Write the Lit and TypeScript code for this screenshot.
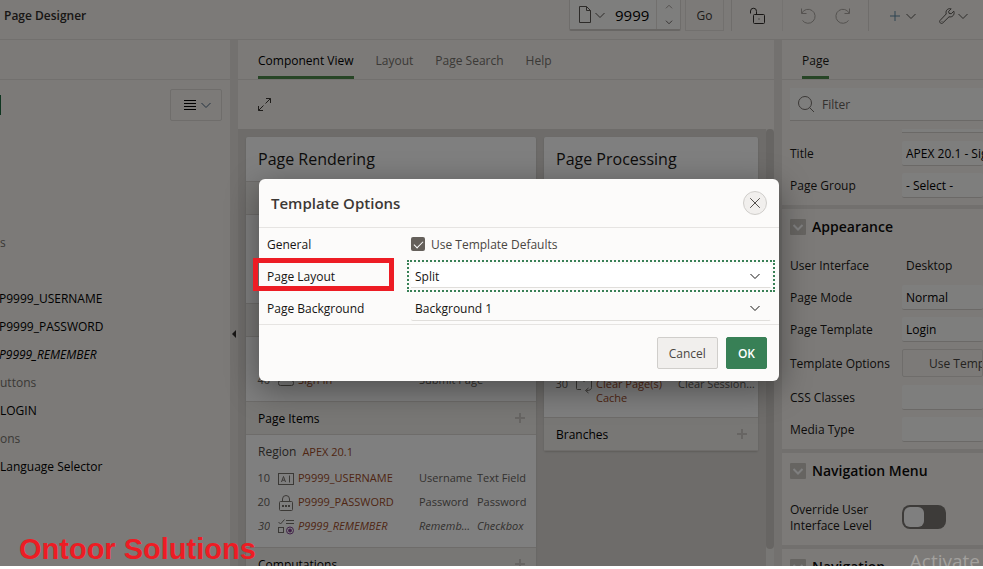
import { LitElement, html, css, svg, nothing } from "lit";
import { customElement, property } from "lit/decorators.js";

const shapes: Record<string, unknown> = {
  chevron: svg`<path d="M3.5 6l4.5 4.5L12.5 6"/>`,
  up: svg`<path d="M4.5 9.5L8 6l3.5 3.5"/>`,
  down: svg`<path d="M4.5 6.5L8 10l3.5-3.5"/>`,
  plus: svg`<path d="M8 3v10M3 8h10"/>`,
  page: svg`<path d="M3.500-.5h7l4 4v12h-11zM10.500-.5v4h4"/>`,
  lock: svg`<rect x="4.500" y="6.500" width="11" height="9" rx="1"/><path d="M7.500 6.500V3.500a3 3 0 0 0-6-.5V5.500"/><path d="M9.500 11h1"/>`,
  undo: svg`<path d="M1.500.5v5H6.500M1.800 5.200A7 7 0 1 1 2.500 12.500"/>`,
  redo: svg`<path d="M14.500.5v5H9.500M14.200 5.200A7 7 0 1 0 13.500 12.500"/>`,
  wrench: svg`<path d="M14.800 3.200l-2.600 2.600-2.200-.500-.400-2L12.200.8C10.300.2 7.300 1 7 4.200l.2 1.800L1 12.500c-1.200 1.700 1 3.800 2.700 2.500L10 8.800c3.300.8 6-2 4.800-5.600z"/><path d="M2.700 13.500h.6"/>`,
  menu: svg`<path d="M2 3.500h12M2 6.500h12M2 9.500h12M2 12.500h12"/>`,
  expand: svg`<path d="M7.500 6.500L12.500 1.500M8 1.500h4.500V6M5.500 8.500L.5 13.500M.5 9v4.500H5"/>`,
  search: svg`<circle cx="7" cy="7" r="6.500"/><path d="M11.500 11.500l4.500 4.500"/>`,
  close: svg`<path d="M2.500 2.500l11 11M13.500 2.500L2.500 13.500"/>`,
  text: svg`<rect x=".5" y="2.500" width="15" height="11"/><path d="M3.500 11L5.500 5.500 7.500 11M4.300 9.200h2.400M11.500 4.500v7"/>`,
  password: svg`<rect x="1.500" y="6.500" width="13" height="9" rx="1"/><path d="M4.500 6.500V4a3.500 3.500 0 0 1 7 0v2.500"/><path stroke-width="2" stroke-dasharray="2 1" d="M4 11h8"/>`,
  check: svg`<path d="M.5 3l2 2L6.500.5M8 1.500h8M8 4.500h8"/><rect x=".5" y="8.500" width="5" height="5"/><g stroke="#834393"><circle cx="12" cy="11.500" r="3.500"/><circle cx="12" cy="11.500" r="1.500" fill="#834393"/></g>`,
  button: svg`<rect x=".5" y="7.500" width="15" height="5" rx="2"/>`,
  cache: svg`<path d="M3 1.500H.5v10q0 1 1 1H5M12 1.500h3.500v9q0 3-5 3M12.500 11l-3 2.500 3 2.500M5 1.500v1M8 4v1"/>`,
};

@customElement("ui-icon")
export class UiIcon extends LitElement {
  static styles = css`
    :host { display: inline-flex; flex: none; width: 16px; height: 16px; }
    svg { width: 100%; height: 100%; fill: none; stroke: currentColor; overflow: visible; }
  `;
  @property() name = "chevron";
  render() {
    return html`<svg viewBox="0 0 16 16" aria-hidden="true">${shapes[this.name]}</svg>`;
  }
}

const base = css`
  * { box-sizing: border-box; }
  button, input, select { font: inherit; color: inherit; margin: 0; }
  button { display: inline-flex; align-items: center; justify-content: center; padding: 0; background: none; border: 0; white-space: nowrap; }
  h1, h2, h3, ul { margin: 0; padding: 0; font-weight: 400; list-style: none; }
`;

@customElement("designer-toolbar")
export class DesignerToolbar extends LitElement {
  static styles = [base, css`
    :host { display: flex; justify-content: space-between; height: 40px; padding-left: 4px; border-bottom: 1px solid #e4e0dc; overflow: hidden; }
    h1 { font-size: 12px; font-weight: 600; line-height: 32px; color: #312d2a; }
    .tools { display: flex; height: 31px; color: #5a5652; }
    .picker { display: flex; width: 112px; margin-right: 4px; border: 1px solid #dedad6; border-top: 0; border-bottom: 2px solid #d0ccc8; border-radius: 0 0 2px 2px; background: #fdfcfb; }
    .type { width: 40px; padding-left: 4px; }
    .number { width: 46px; padding: 0 0 0 5px; border: 0; background: none; font-size: 15px; color: #000; }
    .steps { display: flex; flex-direction: column; flex: 1; border-left: 1px solid #e4e0dc; color: #99938e; }
    .steps button { flex: 1; }
    .steps button:last-child { color: #5a5652; }
    .steps ui-icon { height: 14px; }
    .go { width: 39px; padding-top: 2px; border: 1px solid #e4e0dc; border-top: 0; color: #3c3835; }
    .cell { display: flex; align-items: center; justify-content: center; }
    .lock { width: 51px; margin-left: 7px; border-left: 1px solid #dedad6; color: #312d2a; }
    .history { width: 86px; gap: 19px; border-left: 1px solid #eae6e2; color: #aaa5a0; }
    .more { width: 115px; gap: 20px; padding-left: 18px; justify-content: flex-start; border-left: 1px solid #dedad6; }
    .blue { color: #5d88a4; }
  `];
  render() {
    return html`
      <h1>Page Designer</h1>
      <div class="tools">
        <div class="picker">
          <button class="type" aria-label="Page type"><ui-icon name="page"></ui-icon><ui-icon></ui-icon></button>
          <input class="number" aria-label="Page number" value="9999" />
          <div class="steps">
            <button aria-label="Next page"><ui-icon name="up"></ui-icon></button>
            <button aria-label="Previous page"><ui-icon name="down"></ui-icon></button>
          </div>
        </div>
        <button class="go">Go</button>
        <div class="cell lock"><button aria-label="Lock"><ui-icon name="lock"></ui-icon></button></div>
        <div class="cell history">
          <button aria-label="Undo"><ui-icon name="undo"></ui-icon></button>
          <button aria-label="Redo"><ui-icon name="redo"></ui-icon></button>
        </div>
        <div class="cell more">
          <button aria-label="Create"><ui-icon class="blue" name="plus"></ui-icon><ui-icon></ui-icon></button>
          <button aria-label="Utilities"><ui-icon name="wrench"></ui-icon><ui-icon></ui-icon></button>
        </div>
      </div>`;
  }
}

interface Node { label: string; kind?: string }

@customElement("page-tree")
export class PageTree extends LitElement {
  static styles = [base, css`
    :host { display: block; overflow: hidden; }
    .tabs { height: 40px; border-bottom: 1px solid #e4e0dc; }
    .bar { display: flex; align-items: center; justify-content: space-between; height: 49px; padding-right: 8px; }
    .edge { width: 1px; height: 20px; background: #1e6b41; }
    .menu { width: 52px; height: 32px; padding-left: 4px; border: 1px solid #dedad6; border-radius: 2px; }
    .menu ui-icon:first-child { color: #000; }
    .menu ui-icon:last-child { color: #4a6580; }
    ul { padding-top: 100px; }
    li { height: 28px; line-height: 28px; white-space: nowrap; color: #000; }
    .group { color: #77726d; }
    .gap { margin-bottom: 28px; }
    .item { margin-left: -1px; }
    .italic { font-style: italic; }
  `];
  private nodes: Node[] = [
    { label: "s", kind: "group gap" },
    { label: "P9999_USERNAME", kind: "item" },
    { label: "P9999_PASSWORD", kind: "item" },
    { label: "P9999_REMEMBER", kind: "item italic" },
    { label: "uttons", kind: "group" },
    { label: "LOGIN" },
    { label: "ons", kind: "group" },
    { label: "Language Selector" },
  ];
  render() {
    return html`
      <div class="tabs"></div>
      <div class="bar"><span class="edge"></span>
        <button class="menu" aria-label="Tree menu"><ui-icon name="menu"></ui-icon><ui-icon></ui-icon></button></div>
      <ul>${this.nodes.map((n) => html`<li class=${n.kind ?? ""}>${n.label}</li>`)}</ul>`;
  }
}

interface Row { seq: string; icon: string; name: string; a: string; b?: string; italic?: boolean }

@customElement("component-view")
export class ComponentView extends LitElement {
  static styles = [base, css`
    :host { display: flex; flex-direction: column; min-width: 0; overflow: hidden; }
    .tabs { display: flex; flex: none; gap: 22px; height: 40px; padding-left: 20px; border-bottom: 1px solid #e4e0dc; }
    .tabs button { color: #77726d; border-bottom: 3px solid transparent; padding-top: 5px; }
    .tabs .on { color: #000; border-color: #4f8a4c; }
    .bar { display: flex; flex: none; align-items: center; height: 49px; padding-left: 20px; color: #3c3835; }
    .canvas { display: flex; flex: 1; min-height: 0; background: #dcd9d5; }
    .cards { display: flex; flex: 1; min-width: 0; gap: 8px; padding: 8px 8px 0; align-items: flex-start; overflow: hidden; }
    .card { flex: 290; min-width: 0; background: #fff; border-radius: 2px; box-shadow: 0 1px 2px #bbb7b2; }
    .card.small { flex: 214; }
    h2 { height: 44px; padding-left: 12px; font-size: 16px; line-height: 44px; color: #1a1816; }
    h3 { display: flex; align-items: center; justify-content: space-between; height: 34px; padding: 2px 8px 0 12px; background: #f1eeea; border: solid #dcd9d5; border-width: 1px 0; color: #000; font-size: 12px; }
    h3 ui-icon { margin-top: -2px; color: #cfcbc6; stroke-width: 2; }
    .upper { height: 88px; }
    .region { height: 31px; padding-left: 12px; line-height: 33px; font-size: 12px; color: #4a4642; }
    .region b { margin-left: 3px; font-weight: 400; color: #a04c28; font-size: 11px; }
    table { width: 100%; margin-bottom: 9px; border-collapse: collapse; table-layout: fixed; font-size: 11px; }
    td { height: 24px; padding: 0; color: #66625d; white-space: nowrap; overflow: hidden; text-overflow: ellipsis; }
    td ui-icon { vertical-align: middle; color: #77726d; }
    .seq { width: 24px; text-align: right; }
    .icon { width: 28px; padding-left: 8px; text-overflow: clip; }
    .name { color: #a04c28; }
    .one { width: 58px; padding-right: 2px; }
    .two { width: 59px; padding-right: 8px; }
    .wide { width: 117px; }
    .italic td { font-style: italic; }
    .small table { margin: 0 0 12px; }
    .small td { line-height: 14px; vertical-align: top; padding-top: 2px; white-space: normal; }
    .small .name { width: 82px; padding-right: 10px; }
    .small .wide { width: auto; padding-right: 0; white-space: nowrap; }
    .under { height: 194px; }
    .scroll { width: 8px; flex: none; background: #f1eeea; }
    .thumb { height: calc(100% - 17px); border-radius: 4px; background: #cfcbc6; }
  `];
  private head(label: string | null) {
    return html`<h3>${label ?? nothing}${label ? html`<button aria-label="Add ${label}"><ui-icon name="plus"></ui-icon></button>` : nothing}</h3>`;
  }
  private rows(rows: Row[]) {
    return html`<table><tbody>${rows.map((r) => html`
      <tr class=${r.italic ? "italic" : ""}>
        <td class="seq">${r.seq}</td><td class="icon"><ui-icon name=${r.icon}></ui-icon></td><td class="name">${r.name}</td>
        ${r.b ? html`<td class="one">${r.a}</td><td class="two">${r.b}</td>` : html`<td class="wide">${r.a}</td>`}
      </tr>`)}</tbody></table>`;
  }
  render() {
    return html`
      <nav class="tabs"><button class="on">Component View</button><button>Layout</button><button>Page Search</button><button>Help</button></nav>
      <div class="bar"><button aria-label="Expand"><ui-icon name="expand"></ui-icon></button></div>
      <div class="canvas">
        <div class="cards">
          <section class="card">
            <h2>Page Rendering</h2>
            ${this.head(null)}<div class="upper"></div>
            ${this.head(null)}<div class="region"></div>
            ${this.rows([{ seq: "40", icon: "button", name: "Sign In", a: "Submit Page" }])}
            ${this.head("Page Items")}
            <div class="region">Region <b>APEX 20.1</b></div>
            ${this.rows([
              { seq: "10", icon: "text", name: "P9999_USERNAME", a: "Username", b: "Text Field" },
              { seq: "20", icon: "password", name: "P9999_PASSWORD", a: "Password", b: "Password" },
              { seq: "30", icon: "check", name: "P9999_REMEMBER", a: "Rememb…", b: "Checkbox", italic: true },
            ])}
            ${this.head("Computations")}
          </section>
          <section class="card small">
            <h2>Page Processing</h2>
            <div class="under"></div>
            ${this.rows([{ seq: "30", icon: "cache", name: "Clear Page(s) Cache", a: "Clear Session…" }])}
            ${this.head("Branches")}
          </section>
        </div>
        <div class="scroll"><div class="thumb"></div></div>
      </div>`;
  }
}

@customElement("property-editor")
export class PropertyEditor extends LitElement {
  static styles = [base, css`
    :host { display: flex; flex-direction: column; min-width: 0; overflow: hidden; color: #1a1816; }
    .tabs { flex: none; height: 40px; padding-left: 20px; border-bottom: 1px solid #e4e0dc; }
    .tabs button { height: 39px; padding-top: 5px; border-bottom: 3px solid #4f8a4c; }
    .filter { display: flex; flex: none; align-items: center; gap: 8px; height: 33px; margin: 8px 0 8px 8px; padding-left: 8px; background: #fdfcfb; border-bottom: 1px solid #d6d2ce; color: #77726d; }
    .filter input { flex: 1; min-width: 0; border: 0; padding: 2px 0 0; background: none; }
    .filter input::placeholder { color: #66625d; opacity: 1; }
    .list { flex: 1; min-height: 0; overflow: hidden; }
    .group { padding: 0 0 4px 8px; border-bottom: 4px solid #e4e0dc; }
    .stub { height: 4px; margin: 0 0 4px 112px; background: #fdfcfb; border-bottom: 1px solid #d6d2ce; }
    h2 { display: flex; align-items: center; gap: 6px; height: 36px; margin-bottom: 4px; font-size: 14px; font-weight: 600; color: #0c0b0a; white-space: nowrap; }
    h2 button { width: 16px; height: 16px; background: #ccc8c3; color: #fff; border-radius: 1px; }
    h2 button ui-icon { stroke-width: 2; }
    .row { display: grid; grid-template-columns: 112px 1fr; align-items: center; height: 32px; white-space: nowrap; }
    .row > label, .row > span { padding-top: 2px; }
    .row input[type="text"], .row select { width: 100%; min-width: 0; height: 25px; padding: 2px 0 0 4px; border: 0; border-bottom: 1px solid #d6d2ce; border-radius: 2px; background: #fdfcfb; appearance: none; color: #000; }
    .row > .plain { padding-left: 4px; color: #1a1816; }
    .tall { height: 36px; }
    .wide { height: 28px; padding: 2px 0 0 26px; justify-content: flex-start; border: 1px solid #dedad6; border-radius: 2px; overflow: hidden; color: #4a4642; }
    .double { height: 48px; }
    .double label { width: 90px; white-space: normal; }
    .switch { display: flex; align-items: center; width: 44px; height: 24px; margin: 0; padding: 2px; appearance: none; background: #7a7672; border-radius: 8px; }
    .switch::before { content: ""; width: 20px; height: 20px; background: #fff; border-radius: 6px; }
  `];
  private heading(text: string) {
    return html`<h2><button aria-label="Collapse ${text}"><ui-icon></ui-icon></button>${text}</h2>`;
  }
  private field(label: string, value: string, list = false) {
    const id = label.replace(/ /g, "-");
    return html`<div class="row"><label for=${id}>${label}</label>${list
      ? html`<select id=${id}><option>${value}</option></select>`
      : html`<input id=${id} type="text" .value=${value} />`}</div>`;
  }
  render() {
    return html`
      <nav class="tabs"><button>Page</button></nav>
      <div class="filter"><ui-icon name="search"></ui-icon><input aria-label="Filter" placeholder="Filter" /></div>
      <div class="list">
        <section class="group"><div class="stub"></div>
          ${this.field("Title", "APEX 20.1 - Sign In")}${this.field("Page Group", "- Select -", true)}
        </section>
        <section class="group">${this.heading("Appearance")}
          <div class="row"><span>User Interface</span><span class="plain">Desktop</span></div>
          ${this.field("Page Mode", "Normal", true)}${this.field("Page Template", "Login", true)}
          <div class="row tall"><span>Template Options</span><button class="wide">Use Template Defaults</button></div>
          ${this.field("CSS Classes", "")}${this.field("Media Type", "")}
        </section>
        <section class="group">${this.heading("Navigation Menu")}
          <div class="row double"><label for="override">Override User Interface Level</label><input class="switch" id="override" type="checkbox" role="switch" /></div>
        </section>
        <section class="group">${this.heading("Navigation")}</section>
      </div>`;
  }
}

@customElement("template-options")
export class TemplateOptions extends LitElement {
  static styles = [base, css`
    :host { display: block; width: 520px; background: #fcfbfa; border-radius: 6px; box-shadow: 0 8px 32px rgba(0, 0, 0, 0.4); color: #161513; }
    header { display: flex; align-items: center; justify-content: space-between; height: 49px; padding: 0 12px; border-bottom: 1px solid #e6e4e2; }
    h2 { font-size: 15px; font-weight: 600; color: #3c3835; }
    .close { width: 24px; height: 24px; border: 1px solid #d0cecb; border-radius: 12px; background: #f1efed; color: #3c3835; }
    .close ui-icon { width: 14px; height: 14px; }
    .row { position: relative; display: grid; grid-template-columns: 144px 1fr; align-items: center; height: 32px; padding: 0 8px; }
    .row > label, .row > span, .check span { padding-top: 2px; }
    .row > .check { display: flex; align-items: center; gap: 6px; padding: 0; color: #4a4642; }
    .check input { display: grid; place-items: center; width: 14px; height: 14px; appearance: none; background: #65605b; border-radius: 2px; }
    .check input::after { content: ""; width: 8px; height: 4px; border: solid #fff; border-width: 0 0 1px 1px; transform: translateY(-1px) rotate(-45deg); }
    .select { position: relative; display: flex; align-items: center; }
    .select select { width: 100%; height: 25px; padding: 2px 4px 0; border: 1px solid transparent; border-bottom-color: #e0dedb; border-left: 0; border-radius: 2px; background: #fcfbfa; appearance: none; }
    .select ui-icon { position: absolute; right: 8px; color: #161513; pointer-events: none; }
    .focus select { height: 24px; border-radius: 0; background: #fff; outline: 2px dotted #388056; outline-offset: 2px; }
    .mark { position: absolute; left: -6px; top: -2px; width: 141px; height: 33px; border: 5px solid #ed1c24; pointer-events: none; }
    footer { display: flex; align-items: center; justify-content: flex-end; gap: 8px; height: 57px; padding: 0 12px; border-top: 1px solid #e6e4e2; }
    footer button { height: 32px; padding: 2px 11px 0; border: 1px solid #d0cecb; border-radius: 2px; background: #f1efed; color: #4a4642; }
    footer .ok { background: #388056; border-color: #388056; color: #fff; font-weight: 600; }
  `];
  render() {
    return html`
      <header><h2>Template Options</h2><button class="close" aria-label="Close"><ui-icon name="close"></ui-icon></button></header>
      <div class="row"><span>General</span><label class="check"><input type="checkbox" checked /><span>Use Template Defaults</span></label></div>
      <div class="row"><label for="layout">Page Layout</label>
        <div class="select focus"><select id="layout"><option>Split</option></select><ui-icon></ui-icon></div><div class="mark"></div></div>
      <div class="row"><label for="background">Page Background</label>
        <div class="select"><select id="background"><option>Background 1</option></select><ui-icon></ui-icon></div></div>
      <footer><button>Cancel</button><button class="ok">OK</button></footer>`;
  }
}

@customElement("app-root")
export class AppRoot extends LitElement {
  static styles = [base, css`
    :host { display: block; position: relative; height: calc(100vh - 3px); overflow: hidden; background: #f8f5f1; font: 12px/16px "Open Sans", "Noto Sans", sans-serif; }
    .page { display: flex; flex-direction: column; height: 100%; }
    .panes { display: grid; grid-template-columns: 230px 8px 1fr 8px 201px; flex: 1; min-height: 0; }
    .split { display: flex; align-items: center; justify-content: center; background: #e7e3df; }
    .arrow { width: 0; margin-top: 62px; border: solid transparent; border-width: 4px 4px 4px 0; border-right-color: #312d2a; }
    .backdrop { position: absolute; inset: 0; display: flex; align-items: flex-start; justify-content: center; padding: 179px 0 0 55px; background: rgba(0, 0, 0, 0.5); }
    .brand { position: absolute; left: 19px; bottom: 0; font: bold 29px/34px "Liberation Sans", sans-serif; color: #ed1c24; }
    .notice { position: absolute; right: 3px; bottom: -9px; font-size: 19px; line-height: 28px; color: #a3a19e; }
  `];
  render() {
    return html`
      <div class="page">
        <designer-toolbar></designer-toolbar>
        <main class="panes">
          <page-tree></page-tree>
          <div class="split"><span class="arrow"></span></div>
          <component-view></component-view>
          <div class="split"></div>
          <property-editor></property-editor>
        </main>
      </div>
      <div class="backdrop"><template-options role="dialog" aria-label="Template Options"></template-options></div>
      <div class="notice">Activate</div>
      <div class="brand">Ontoor Solutions</div>`;
  }
}
